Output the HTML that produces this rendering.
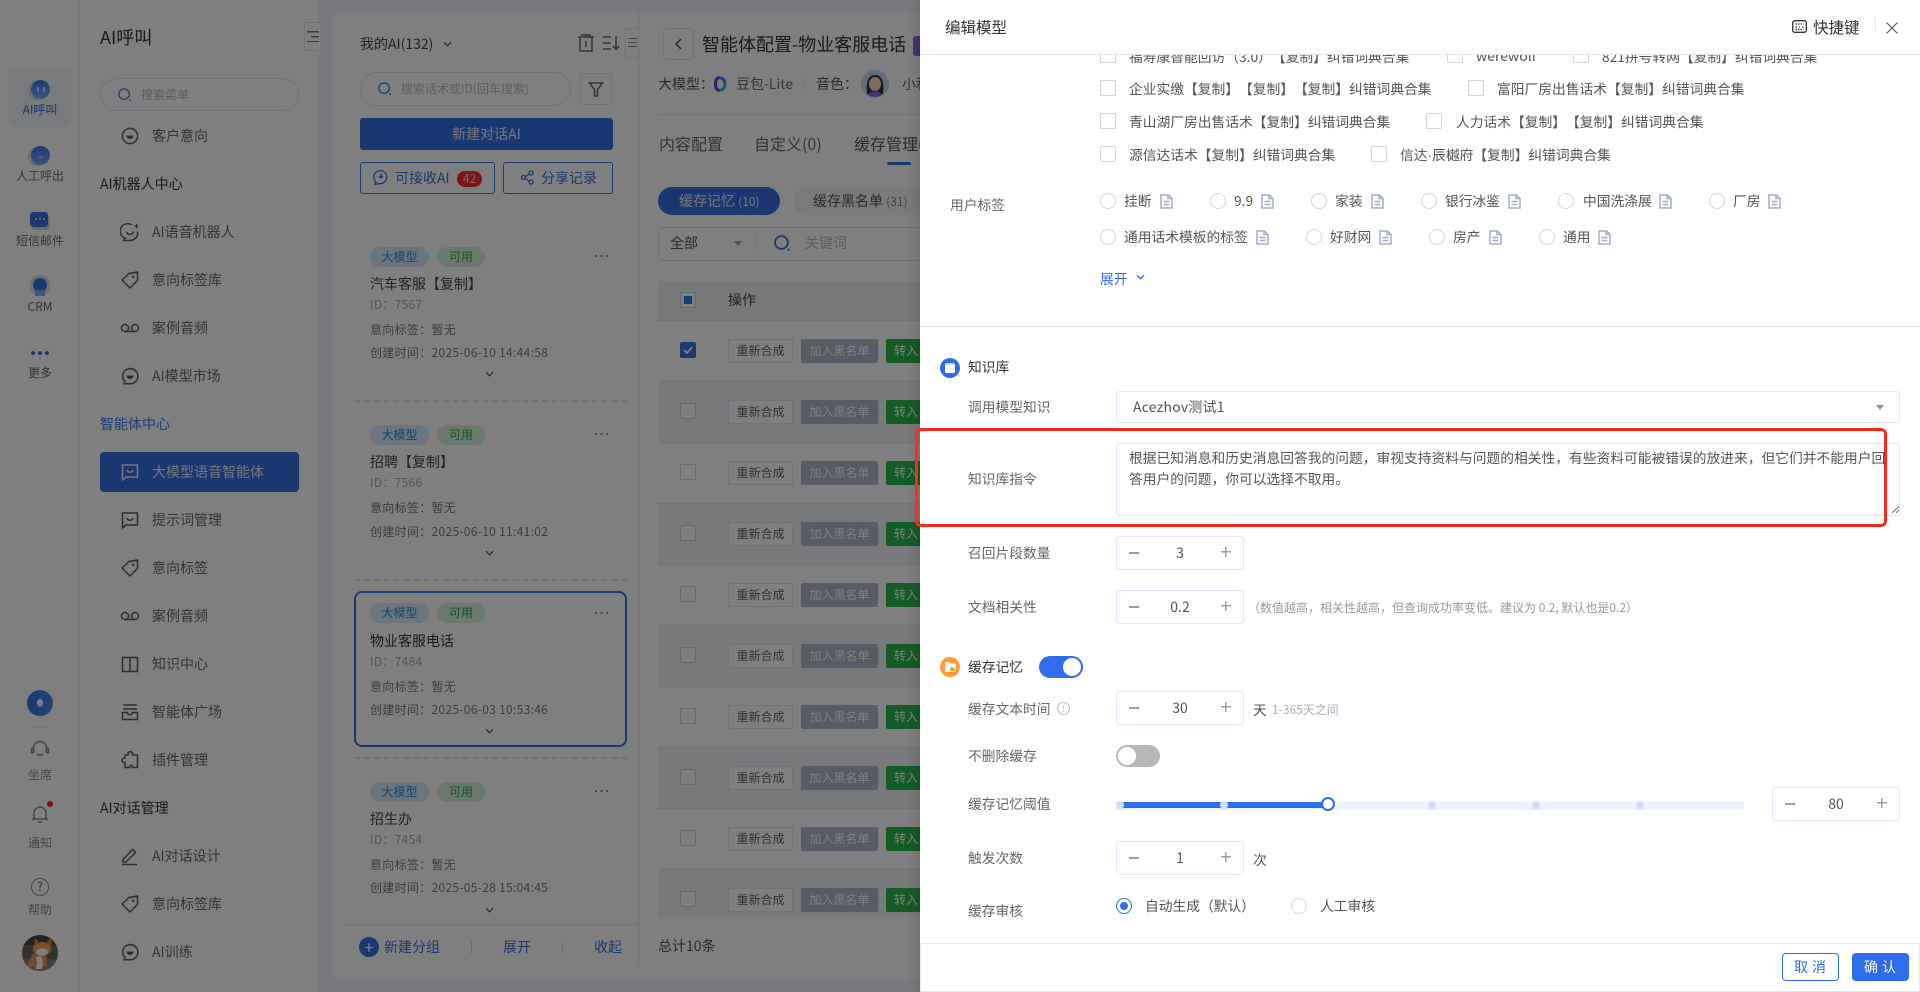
<!DOCTYPE html>
<html lang="zh-CN"><head><meta charset="utf-8"><title>编辑模型</title>
<style>
*{box-sizing:border-box}
html,body{margin:0;padding:0;width:1920px;height:992px;overflow:hidden;background:#fff}
body{font-family:"Noto Sans CJK SC","Liberation Sans",sans-serif;font-size:14px;color:#555;position:relative;text-spacing-trim:space-all}
.t{position:absolute;white-space:nowrap;line-height:20px;height:20px}
.a{position:absolute}
svg{position:absolute;overflow:visible}
.i{width:20px;height:20px;fill:none;stroke:#5c5c5c;stroke-width:1.5;left:120px}
.m{left:152px;color:#666}
.h{left:100px;color:#333}
.s{font-size:12px;text-align:center;left:0;width:80px;color:#666}
.tg{position:absolute;height:20px;border-radius:10px;font-size:12px;line-height:20px;text-align:center}
.tb{left:370px;width:59px;background:#d8ebfa;color:#1f8fe0}
.tv{left:437px;width:48px;background:#d6f0da;color:#2fa84f}
.dt{position:absolute;left:595px;width:13px;height:2px;background:radial-gradient(circle at 1px 1px,#888 1px,transparent 1.2px) 0 0/5.5px 2px repeat-x}
.tt{left:370px;color:#444}
.g{left:370px;font-size:12px;color:#888;letter-spacing:.3px}
.g2{left:370px;font-size:12px;color:#777;letter-spacing:.3px}
.d{position:absolute;left:354px;width:273px;border-top:2px dashed #e4e7ee;height:0}
.rw{position:absolute;left:658px;width:262px;height:61px;border-bottom:1px solid #e4e8ef}
.rg{background:#f1f3f7}
.cb{position:absolute;width:16px;height:16px;border:1px solid #d0d3da;border-radius:2px;background:#fff}
.b1,.b2,.b3{position:absolute;height:24px;font-size:12px;line-height:24px;text-align:center;border-radius:2px}
.b1{left:728px;width:65px;background:#fff;border:1px solid #dce6f8;color:#666;line-height:22px}
.b2{left:801px;width:77px;background:#b0b8cc;color:#fff}
.b3{left:886px;width:34px;background:#26b84a;color:#fff;text-align:left;padding-left:8px;border-radius:2px 0 0 2px}
#ov{position:absolute;left:0;top:0;width:920px;height:992px;background:rgba(0,0,0,.5)}
#dr{position:absolute;left:920px;top:0;width:1000px;height:992px;background:#fff;box-shadow:-4px 0 10px rgba(0,0,0,.12);overflow:hidden}
.c{font-size:13.75px;color:#555}
.dk{position:absolute;width:16px;height:16px;border:1px solid #d4d6da;border-radius:2px;background:#fff}
.rd{position:absolute;width:16px;height:16px;border:1px solid #d4d6da;border-radius:50%;background:#fff}
.l{left:48px;color:#666;font-size:13.75px;margin-top:-1px}
.n{position:absolute;left:196px;width:128px;height:34px;border:1px solid #dce6fa;border-radius:4px;background:#fff;text-align:center;line-height:32px;color:#555;font-size:14px}
.n:before{content:"";position:absolute;left:12px;top:15px;width:10px;height:1.5px;background:#9a9fa8}
.n:after{content:"";position:absolute;right:12px;top:10px;width:10px;height:10px;background:linear-gradient(#9a9fa8,#9a9fa8) center/10px 1.5px no-repeat,linear-gradient(#9a9fa8,#9a9fa8) center/1.5px 10px no-repeat}
.di{width:13px;height:15px;fill:none;stroke:#a3adc6;stroke-width:1.5}
.dot{position:absolute;width:8px;height:8px;border-radius:50%;background:#cfdcfa;top:801px}
</style></head><body>
<svg width="0" height="0" style="position:absolute"><defs>
<symbol id="face" viewBox="0 0 20 20"><circle cx="10" cy="10" r="7.6"/><path d="M6.5 9.5h7a3.5 3.5 0 0 1-7 0z" fill="#5c5c5c" stroke="none"/></symbol>
<symbol id="face2" viewBox="0 0 20 20"><path d="M6 16.500A7.600 7.600 0 1 1 10 17.800H3"/><path d="M6.500 9.500h7a3.500 3.500 0 0 1-7 0z" fill="#5c5c5c" stroke="none"/></symbol>
<symbol id="bot" viewBox="0 0 20 20"><path d="M12 3A7.500 7.500 0 1 0 5.500 16.300L3.500 18.500H10.500A7.500 7.500 0 0 0 17.500 9.500"/><path d="M6.500 9.500c.5 4 6 4 7 0"/><path d="M16.500 1l.8 2.200L19.500 4l-2.200.8L16.500 7l-.8-2.200L13.500 4l2.200-.8z" fill="#5c5c5c" stroke="none"/></symbol>
<symbol id="tag" viewBox="0 0 20 20"><path d="M2 10l7-6.500 8.500-1.500v8.500L10 18z" stroke-linejoin="round"/><circle cx="13" cy="6.800" r="1.200" fill="#5c5c5c" stroke="none"/></symbol>
<symbol id="vm" viewBox="0 0 20 20"><circle cx="5" cy="10" r="3.500"/><circle cx="15" cy="10" r="3.500"/><path d="M5 13.500h10"/></symbol>
<symbol id="msg" viewBox="0 0 20 20"><path d="M2.500 3h15v12H6l-3.500 3z" stroke-linejoin="round"/><path d="M7 8c.5 3 5.500 3 6 0"/></symbol>
<symbol id="book" viewBox="0 0 20 20"><path d="M2.500 3.500H10v14H2.500zM10 3.500h7.500v14H10z"/></symbol>
<symbol id="box" viewBox="0 0 20 20"><path d="M3 3h14M3 7h14M2.500 10.500h5c0 3 5 3 5 0h5v7h-15z"/></symbol>
<symbol id="pz" viewBox="0 0 20 20"><path d="M8 3.500c.5-2.500 4-2.500 4.500 0v1.500h5v12.500h-5c1-3-3-3-2.500 0H5v-5c-4 0-4-4.500 0-4.500V5h3z" stroke-linejoin="round"/></symbol>
<symbol id="pen" viewBox="0 0 20 20"><path d="M3 13.500L12.500 3.500l3 3L6 16H3zM2 18.500h15"/></symbol>
<symbol id="doc" viewBox="0 0 13 15"><path d="M1 1h7.500L12 4.500V14H1zM8 1v3.500h4M3.500 7.500h6M3.500 10.500h6"/></symbol>
<symbol id="srch" viewBox="0 0 16 16"><circle cx="7" cy="7" r="6"/><path d="M13 13l1.500 1.500"/></symbol>
<symbol id="chev" viewBox="0 0 10 6"><path d="M1 1l4 4 4-4"/></symbol>
</defs></svg>

<!-- column 1 -->
<div class="a" style="left:0;top:0;width:80px;height:992px;background:#fff;border-right:1px solid #f2f2f2"></div>
<div class="a" style="left:8px;top:69px;width:64px;height:58px;border-radius:8px;background:#f2f5fb"></div>
<div class="a" style="left:31px;top:80px;width:19px;height:19px;border-radius:50%;background:linear-gradient(#3470e0,#7ea8ff);box-shadow:-3px 1px 0 #cfd8ee"></div>
<div class="a" style="left:37px;top:87px;width:2px;height:5px;background:#cfdcfa"></div><div class="a" style="left:43px;top:87px;width:2px;height:5px;background:#cfdcfa"></div>
<div class="t s" style="top:100px;color:#3470e0">AI呼叫</div>
<div class="a" style="left:31px;top:146px;width:19px;height:19px;border-radius:50%;background:linear-gradient(#3470e0,#7ea8ff);box-shadow:-3px 1px 0 #cfd8ee"></div>
<div class="a" style="left:38px;top:155px;width:5px;height:3px;border-bottom:1px solid #cfdcfa;border-radius:0 0 4px 4px"></div>
<div class="t s" style="top:166px">人工呼出</div>
<div class="a" style="left:30px;top:212px;width:18px;height:15px;border-radius:3px;background:#3a72e0;box-shadow:2px 3px 0 #cfd8ee"></div>
<div class="a" style="left:34px;top:218px;width:11px;height:2px;background:radial-gradient(circle,#dfe8ff 1px,transparent 1px) 0 0/4px 2px"></div>
<div class="t s" style="top:231px">短信邮件</div>
<div class="a" style="left:33px;top:278px;width:14px;height:14px;border-radius:50%;background:#3470e0;box-shadow:0 0 0 3px #cfd8ee"></div>
<div class="a" style="left:35px;top:290px;width:10px;height:6px;background:#7ea8ff;border-radius:3px 3px 0 0"></div>
<div class="t s" style="top:297px">CRM</div>
<div class="a" style="left:31px;top:351px;width:4px;height:4px;border-radius:50%;background:#3470e0"></div><div class="a" style="left:38px;top:351px;width:4px;height:4px;border-radius:50%;background:#3470e0"></div><div class="a" style="left:45px;top:351px;width:4px;height:4px;border-radius:50%;background:#3470e0"></div>
<div class="t s" style="top:363px">更多</div>
<div class="a" style="left:27px;top:690px;width:26px;height:26px;border-radius:50%;background:linear-gradient(90deg,#2f6ee8,#3f8fe0)"></div>
<div class="a" style="left:37px;top:699px;width:6px;height:8px;border-radius:50%;background:#fff"></div>
<div class="a" style="left:32px;top:726px;width:17px;height:2px;background:#eef0f5"></div>
<svg style="left:30px;top:740px;width:20px;height:20px;fill:none;stroke:#888;stroke-width:1.500" viewBox="0 0 20 20"><path d="M3.500 8a6.500 6.500 0 0 1 13 0M3.500 8v5M16.500 8v5M7 14c2 1.500 4 1.500 6 0"/><rect x="1.500" y="8" width="2" height="5" rx="1"/><rect x="16.500" y="8" width="2" height="5" rx="1"/></svg>
<div class="t s" style="top:765px;color:#888">坐席</div>
<svg style="left:31px;top:804px;width:18px;height:20px;fill:none;stroke:#888;stroke-width:1.500" viewBox="0 0 18 20"><path d="M1 15h16M3 15V9a6 6 0 0 1 12 0v6M7 18h4"/></svg>
<div class="a" style="left:47px;top:801px;width:6px;height:6px;border-radius:50%;background:#ff2020"></div>
<div class="t s" style="top:833px;color:#888">通知</div>
<div class="a" style="left:31px;top:878px;width:18px;height:18px;border-radius:50%;border:1.500px solid #888;text-align:center;font-size:12px;line-height:15px;color:#888;font-weight:700">?</div>
<div class="t s" style="top:900px;color:#888">帮助</div>
<svg style="left:22px;top:935px;width:36px;height:36px" viewBox="0 0 36 36"><defs><clipPath id="av"><circle cx="18" cy="18" r="18"/></clipPath></defs><g clip-path="url(#av)"><rect width="36" height="36" fill="#6a6560"/><rect y="24" width="36" height="12" fill="#8a8078"/><rect width="36" height="10" fill="#4a4442"/><path d="M6 32c0-8 5-16 12-16s8 8 6 16z" fill="#e59a55"/><ellipse cx="20" cy="14" rx="9" ry="7" fill="#eda35c"/><path d="M12 10l1-7 5 5zM24 8l5-5 1 8z" fill="#d8853f"/><ellipse cx="20" cy="17" rx="6" ry="3.500" fill="#fff"/><path d="M14 22c2 6 1 10-1 12h7c1-4 1-9-1-13z" fill="#fff"/></g></svg>

<!-- column 2 -->
<div class="a" style="left:80px;top:0;width:240px;height:992px;background:#fff;border-right:1px solid #eef0f5"></div>
<div class="t" style="left:100px;top:27px;font-size:18px;color:#333">AI呼叫</div>
<div class="a" style="left:304px;top:22px;width:16px;height:29px;border:1px solid #e2e6ee;border-right:0;background:#fff"></div>
<div class="a" style="left:307px;top:31px;width:12px;height:11px;background:linear-gradient(#777,#777) 0 0/12px 1.500px no-repeat,linear-gradient(#777,#777) 4px 5px/8px 1.500px no-repeat,linear-gradient(#777,#777) 0 10px/12px 1.500px no-repeat"></div>
<div class="a" style="left:100px;top:78px;width:199px;height:33px;border:1px solid #dbe5f7;border-radius:17px"></div>
<svg style="left:118px;top:88px;width:14px;height:14px;fill:none;stroke:#3470e0;stroke-width:1.500"><use href="#srch"/></svg>
<div class="t" style="left:141px;top:85px;font-size:12px;color:#bbb">搜索菜单</div>
<svg class="i" style="top:126px"><use href="#face"/></svg><div class="t m" style="top:126px">客户意向</div>
<div class="t h" style="top:174px">AI机器人中心</div>
<svg class="i" style="top:222px"><use href="#bot"/></svg><div class="t m" style="top:222px">AI语音机器人</div>
<svg class="i" style="top:270px"><use href="#tag"/></svg><div class="t m" style="top:270px">意向标签库</div>
<svg class="i" style="top:318px"><use href="#vm"/></svg><div class="t m" style="top:318px">案例音频</div>
<svg class="i" style="top:366px"><use href="#face2"/></svg><div class="t m" style="top:366px">AI模型市场</div>
<div class="t h" style="top:414px;color:#3478f0">智能体中心</div>
<div class="a" style="left:100px;top:452px;width:199px;height:40px;border-radius:4px;background:#3470e0"></div>
<svg class="i" style="top:462px;stroke:#e8eefc"><use href="#msg"/></svg><div class="t m" style="top:462px;color:#e8eefc">大模型语音智能体</div>
<svg class="i" style="top:510px"><use href="#msg"/></svg><div class="t m" style="top:510px">提示词管理</div>
<svg class="i" style="top:558px"><use href="#tag"/></svg><div class="t m" style="top:558px">意向标签</div>
<svg class="i" style="top:606px"><use href="#vm"/></svg><div class="t m" style="top:606px">案例音频</div>
<svg class="i" style="top:654px"><use href="#book"/></svg><div class="t m" style="top:654px">知识中心</div>
<svg class="i" style="top:702px"><use href="#box"/></svg><div class="t m" style="top:702px">智能体广场</div>
<svg class="i" style="top:750px"><use href="#pz"/></svg><div class="t m" style="top:750px">插件管理</div>
<div class="t h" style="top:798px">AI对话管理</div>
<svg class="i" style="top:846px"><use href="#pen"/></svg><div class="t m" style="top:846px">AI对话设计</div>
<svg class="i" style="top:894px"><use href="#tag"/></svg><div class="t m" style="top:894px">意向标签库</div>
<svg class="i" style="top:942px"><use href="#face2"/></svg><div class="t m" style="top:942px">AI训练</div>

<!-- strip and panel -->
<div class="a" style="left:320px;top:0;width:600px;height:992px;background:#eff3fa"></div>
<div class="a" style="left:332px;top:12px;width:600px;height:967px;background:#fff;border-radius:8px 0 0 8px"></div>
<div class="a" style="left:638px;top:12px;width:1px;height:955px;background:#e4e7ee"></div>

<!-- list -->
<div class="t" style="left:360px;top:34px;color:#444">我的AI(132)</div>
<svg style="left:443px;top:41px;width:9px;height:6px;fill:none;stroke:#555;stroke-width:1.500"><use href="#chev"/></svg>
<svg style="left:578px;top:34px;width:16px;height:18px;fill:none;stroke:#666;stroke-width:1.500" viewBox="0 0 16 18"><path d="M0 3h16M3 1h10M2 3v14h12V3M8 7v6"/></svg>
<svg style="left:603px;top:35px;width:17px;height:16px;fill:none;stroke:#666;stroke-width:1.500" viewBox="0 0 17 16"><path d="M0 2h8M0 8h8M0 14h8M13 1v13M10 11l3 3.500 3-3.500"/></svg>
<div class="a" style="left:625px;top:28px;width:13px;height:30px;border:1px solid #e2e6ee;border-right:0;background:#fff"></div>
<div class="a" style="left:628px;top:38px;width:9px;height:9px;background:linear-gradient(#888,#888) 0 0/9px 1px no-repeat,linear-gradient(#888,#888) 0 4px/9px 1px no-repeat,linear-gradient(#888,#888) 0 8px/9px 1px no-repeat"></div>
<div class="a" style="left:360px;top:72px;width:211px;height:34px;border:1px solid #dbe5f7;border-radius:17px"></div>
<svg style="left:378px;top:82px;width:14px;height:14px;fill:none;stroke:#3470e0;stroke-width:1.500"><use href="#srch"/></svg>
<div class="t" style="left:401px;top:79px;font-size:12px;color:#bbb">搜索话术或ID(回车搜索)</div>
<div class="a" style="left:580px;top:73px;width:32px;height:32px;border:1px solid #dfe5f2;border-radius:3px"></div>
<svg style="left:589px;top:82px;width:14px;height:15px;fill:none;stroke:#666;stroke-width:1.500" viewBox="0 0 14 15"><path d="M.5 1h13L8.500 7.500V14h-3V7.500z"/></svg>
<div class="a" style="left:360px;top:118px;width:253px;height:32px;border-radius:3px;background:#3470e0;color:#e8eefc;text-align:center;line-height:32px">新建对话AI</div>
<div class="a" style="left:360px;top:162px;width:135px;height:32px;border:1px solid #3470e0;border-radius:3px"></div>
<svg style="left:374px;top:170px;width:14px;height:15px;fill:none;stroke:#3470e0;stroke-width:1.300" viewBox="0 0 14 15"><path d="M2 12a6.500 6.500 0 1 1 3 1.500L1 14.500zM7 3.500V8M5 6l2 2 2-2"/></svg>
<div class="t" style="left:395px;top:168px;color:#3470e0">可接收AI</div>
<div class="a" style="left:457px;top:171px;width:25px;height:16px;border-radius:8px;background:#ff2830;color:#f4d0d0;font-size:12px;line-height:16px;text-align:center">42</div>
<div class="a" style="left:503px;top:162px;width:110px;height:32px;border:1px solid #3470e0;border-radius:3px"></div>
<svg style="left:521px;top:170px;width:13px;height:15px;fill:none;stroke:#3470e0;stroke-width:1.300" viewBox="0 0 13 15"><circle cx="2.500" cy="7.500" r="2"/><circle cx="10" cy="3" r="2"/><circle cx="10" cy="12" r="2"/><path d="M4.500 6.500L8 4M4.500 8.500L8 11"/></svg>
<div class="t" style="left:541px;top:168px;color:#3470e0">分享记录</div>

<div class="tg tb" style="top:247px">大模型</div><div class="tg tv" style="top:247px">可用</div><div class="dt" style="top:255px"></div>
<div class="t tt" style="top:274px">汽车客服【复制】</div><div class="t g" style="top:295px;color:#aaa">ID：7567</div>
<div class="t g2" style="top:320px">意向标签：暂无</div><div class="t g2" style="top:343px">创建时间：2025-06-10 14:44:58</div>
<svg style="left:485px;top:371px;width:9px;height:6px;fill:none;stroke:#444;stroke-width:1.300"><use href="#chev"/></svg>
<div class="d" style="top:400px"></div>
<div class="tg tb" style="top:425px">大模型</div><div class="tg tv" style="top:425px">可用</div><div class="dt" style="top:433px"></div>
<div class="t tt" style="top:452px">招聘【复制】</div><div class="t g" style="top:473px;color:#aaa">ID：7566</div>
<div class="t g2" style="top:498px">意向标签：暂无</div><div class="t g2" style="top:522px">创建时间：2025-06-10 11:41:02</div>
<svg style="left:485px;top:550px;width:9px;height:6px;fill:none;stroke:#444;stroke-width:1.300"><use href="#chev"/></svg>
<div class="d" style="top:579px"></div>
<div class="a" style="left:354px;top:591px;width:273px;height:156px;border:2px solid #3470e0;border-radius:8px"></div>
<div class="tg tb" style="top:603px">大模型</div><div class="tg tv" style="top:603px">可用</div><div class="dt" style="top:612px"></div>
<div class="t tt" style="top:631px;color:#333">物业客服电话</div><div class="t g" style="top:652px;color:#aaa">ID：7484</div>
<div class="t g2" style="top:677px">意向标签：暂无</div><div class="t g2" style="top:700px">创建时间：2025-06-03 10:53:46</div>
<svg style="left:485px;top:728px;width:9px;height:6px;fill:none;stroke:#444;stroke-width:1.300"><use href="#chev"/></svg>
<div class="d" style="top:757px"></div>
<div class="tg tb" style="top:782px">大模型</div><div class="tg tv" style="top:782px">可用</div><div class="dt" style="top:790px"></div>
<div class="t tt" style="top:809px">招生办</div><div class="t g" style="top:830px;color:#aaa">ID：7454</div>
<div class="t g2" style="top:855px">意向标签：暂无</div><div class="t g2" style="top:878px">创建时间：2025-05-28 15:04:45</div>
<svg style="left:485px;top:907px;width:9px;height:6px;fill:none;stroke:#444;stroke-width:1.300"><use href="#chev"/></svg>
<div class="a" style="left:344px;top:923px;width:294px;height:3px;background:#eef1f7"></div>
<div class="a" style="left:344px;top:926px;width:294px;height:53px;background:#fff"></div>
<div class="a" style="left:359px;top:937px;width:20px;height:20px;border-radius:50%;background:#3470e0;color:#fff;text-align:center;line-height:19px;font-size:17px">+</div>
<div class="t" style="left:384px;top:937px;color:#3470e0">新建分组</div>
<div class="a" style="left:471px;top:941px;width:1px;height:13px;background:#ddd"></div>
<div class="t" style="left:503px;top:937px;color:#3470e0">展开</div>
<div class="a" style="left:562px;top:941px;width:1px;height:13px;background:#ddd"></div>
<div class="t" style="left:594px;top:937px;color:#3470e0">收起</div>

<!-- right -->
<div class="a" style="left:663px;top:28px;width:31px;height:32px;border:1px solid #dfe5f2;border-radius:4px"></div>
<svg style="left:675px;top:38px;width:7px;height:12px;fill:none;stroke:#555;stroke-width:1.500" viewBox="0 0 7 12"><path d="M6 1L1 6l5 5"/></svg>
<div class="t" style="left:702px;top:34px;font-size:18px;color:#333;line-height:20px">智能体配置-物业客服电话</div>
<div class="a" style="left:913px;top:36px;width:7px;height:20px;background:#9060f0;border-radius:3px 0 0 3px"></div>
<div class="t" style="left:658px;top:74px;color:#555">大模型：</div>
<svg style="left:713px;top:76px;width:14px;height:16px;fill:none" viewBox="0 0 14 16"><path d="M7 2C4 1 2.500 4 2.500 8S4 15 7 14" stroke="#6a40e0" stroke-width="3"/><path d="M7 2c3 0 5 2.500 5 6" stroke="#3a8af0" stroke-width="3"/><path d="M12 8c0 3.500-2 6-5 6" stroke="#20c0a0" stroke-width="3"/></svg>
<div class="t" style="left:736px;top:74px;color:#666">豆包-Lite</div>
<div class="a" style="left:803px;top:78px;width:1px;height:12px;background:#e4e7ee"></div>
<div class="t" style="left:816px;top:74px;color:#555">音色：</div>
<svg style="left:861px;top:70px;width:28px;height:28px" viewBox="0 0 28 28"><circle cx="14" cy="14" r="14" fill="#c2dcf2"/><path d="M6 24c-1-10 0-19 8-19s9 9 8 19z" fill="#333"/><ellipse cx="14" cy="14" rx="6" ry="7" fill="#fbd6c0"/><path d="M7 25c2-5 12-5 14 0a14 14 0 0 1-14 0z" fill="#7a6ae0"/></svg>
<div class="t" style="left:902px;top:74px;color:#666">小和</div>
<div class="a" style="left:658px;top:114px;width:262px;height:1px;background:#e8ebf3"></div>
<div class="t" style="left:659px;top:133px;font-size:16px;color:#666">内容配置</div>
<div class="t" style="left:754px;top:133px;font-size:16px;color:#666">自定义(0)</div>
<div class="t" style="left:854px;top:133px;font-size:16px;color:#555">缓存管理(</div>
<div class="a" style="left:887px;top:162px;width:24px;height:3px;border-radius:2px;background:#3470e0"></div>
<div class="a" style="left:658px;top:187px;width:122px;height:28px;border-radius:14px;background:#3470e0"></div>
<div class="t" style="left:679px;top:191px;color:#e8eefc">缓存记忆 <span style="font-size:12px">(10)</span></div>
<div class="a" style="left:793px;top:187px;width:127px;height:28px;border-radius:14px 0 0 14px;background:#f2f4f7"></div>
<div class="t" style="left:813px;top:191px;color:#555">缓存黑名单 <span style="font-size:12px;color:#888">(31)</span></div>
<div class="a" style="left:658px;top:227px;width:262px;height:34px;border:1px solid #dfe5f2;border-right:0;border-radius:4px 0 0 4px"></div>
<div class="t" style="left:670px;top:233px;color:#555">全部</div>
<div class="a" style="left:734px;top:241px;border:4px solid transparent;border-top:5px solid #9a9fa8"></div>
<div class="a" style="left:756px;top:236px;width:1px;height:14px;background:#e4e7ee"></div>
<svg style="left:774px;top:235px;width:17px;height:17px;fill:none;stroke:#3470e0;stroke-width:1.700"><use href="#srch"/></svg>
<div class="t" style="left:805px;top:233px;color:#bbb">关键词</div>
<div class="a" style="left:658px;top:281px;width:262px;height:40px;background:#edf0f5;border-bottom:1px solid #e4e8ef"></div>
<div class="cb" style="left:680px;top:292px"></div><div class="a" style="left:684px;top:296px;width:8px;height:8px;background:#1a84ff"></div>
<div class="t" style="left:728px;top:290px;color:#444">操作</div>

<div class="rw" style="top:321px"></div><div class="rw rg" style="top:382px"></div><div class="rw" style="top:443px"></div><div class="rw rg" style="top:504px"></div><div class="rw" style="top:565px"></div><div class="rw rg" style="top:626px"></div><div class="rw" style="top:687px"></div><div class="rw rg" style="top:748px"></div><div class="rw" style="top:809px"></div><div class="rw rg" style="top:870px;height:47px;border:0"></div>

<div class="cb" style="left:680px;top:342px;background:#3470e0;border-color:#3470e0"></div>
<svg style="left:683px;top:346px;width:10px;height:8px;fill:none;stroke:#fff;stroke-width:1.800" viewBox="0 0 10 8"><path d="M1 4l3 3 5-6"/></svg>
<div class="b1" style="top:339px">重新合成</div><div class="b2" style="top:339px">加入黑名单</div><div class="b3" style="top:339px">转入</div>
<div class="cb" style="left:680px;top:403px"></div><div class="b1" style="top:400px">重新合成</div><div class="b2" style="top:400px">加入黑名单</div><div class="b3" style="top:400px">转入</div>
<div class="cb" style="left:680px;top:464px"></div><div class="b1" style="top:461px">重新合成</div><div class="b2" style="top:461px">加入黑名单</div><div class="b3" style="top:461px">转入</div>
<div class="cb" style="left:680px;top:525px"></div><div class="b1" style="top:522px">重新合成</div><div class="b2" style="top:522px">加入黑名单</div><div class="b3" style="top:522px">转入</div>
<div class="cb" style="left:680px;top:586px"></div><div class="b1" style="top:583px">重新合成</div><div class="b2" style="top:583px">加入黑名单</div><div class="b3" style="top:583px">转入</div>
<div class="cb" style="left:680px;top:647px"></div><div class="b1" style="top:644px">重新合成</div><div class="b2" style="top:644px">加入黑名单</div><div class="b3" style="top:644px">转入</div>
<div class="cb" style="left:680px;top:708px"></div><div class="b1" style="top:705px">重新合成</div><div class="b2" style="top:705px">加入黑名单</div><div class="b3" style="top:705px">转入</div>
<div class="cb" style="left:680px;top:769px"></div><div class="b1" style="top:766px">重新合成</div><div class="b2" style="top:766px">加入黑名单</div><div class="b3" style="top:766px">转入</div>
<div class="cb" style="left:680px;top:830px"></div><div class="b1" style="top:827px">重新合成</div><div class="b2" style="top:827px">加入黑名单</div><div class="b3" style="top:827px">转入</div>
<div class="cb" style="left:680px;top:891px"></div><div class="b1" style="top:888px">重新合成</div><div class="b2" style="top:888px">加入黑名单</div><div class="b3" style="top:888px">转入</div>
<div class="t" style="left:658px;top:936px;color:#555">总计10条</div>

<div id="ov"></div>

<!-- drawer: coordinates relative to x=920 -->
<div id="dr">
<div class="dk" style="left:180px;top:47px"></div><div class="t c" style="left:209px;top:46px">福寿康智能回访（3.0）【复制】纠错词典合集</div>
<div class="dk" style="left:527px;top:47px"></div><div class="t" style="left:556px;top:46px;color:#555;font-size:14px">werewolf</div>
<div class="dk" style="left:653px;top:47px"></div><div class="t c" style="left:682px;top:46px">821拼号转网【复制】纠错词典合集</div>
<div class="a" style="left:0;top:0;width:1000px;height:55px;background:#fff;border-bottom:1px solid #e5e6ea"></div>
<div class="t" style="left:25px;top:17px;font-size:15.500px;color:#333">编辑模型</div>
<svg style="left:872px;top:20px;width:15px;height:13px;fill:none;stroke:#333;stroke-width:1.300" viewBox="0 0 15 13"><rect x=".7" y=".7" width="13.600" height="11.600" rx="2"/><path d="M3.500 4h8M3.500 7h2M7 7h1M10 7h1.500M3.500 9.500h8" stroke-dasharray="1.500 1"/></svg>
<div class="t" style="left:893px;top:17px;font-size:15.500px;color:#333">快捷键</div>
<div class="a" style="left:955px;top:17px;width:1px;height:16px;background:#e5e6ea"></div>
<svg style="left:966px;top:22px;width:12px;height:12px;fill:none;stroke:#555;stroke-width:1.200" viewBox="0 0 12 12"><path d="M.5.500l11 11M11.500.500l-11 11"/></svg>

<div class="dk" style="left:180px;top:80px"></div><div class="t c" style="left:209px;top:78px">企业实缴【复制】【复制】【复制】纠错词典合集</div>
<div class="dk" style="left:548px;top:80px"></div><div class="t c" style="left:577px;top:78px">富阳厂房出售话术【复制】纠错词典合集</div>
<div class="dk" style="left:180px;top:113px"></div><div class="t c" style="left:209px;top:111px">青山湖厂房出售话术【复制】纠错词典合集</div>
<div class="dk" style="left:506px;top:113px"></div><div class="t c" style="left:536px;top:111px">人力话术【复制】【复制】纠错词典合集</div>
<div class="dk" style="left:180px;top:146px"></div><div class="t c" style="left:209px;top:144px">源信达话术【复制】纠错词典合集</div>
<div class="dk" style="left:451px;top:146px"></div><div class="t c" style="left:480px;top:144px">信达<span style="font-family:'Liberation Sans',sans-serif">·</span>辰樾府【复制】纠错词典合集</div>

<div class="t l" style="left:30px;top:195px">用户标签</div>
<div class="rd" style="left:180px;top:193px"></div><div class="t c" style="left:204px;top:190px">挂断</div><svg class="di" style="left:240px;top:194px"><use href="#doc"/></svg>
<div class="rd" style="left:290px;top:193px"></div><div class="t c" style="left:314px;top:190px">9.9</div><svg class="di" style="left:341px;top:194px"><use href="#doc"/></svg>
<div class="rd" style="left:391px;top:193px"></div><div class="t c" style="left:415px;top:190px">家装</div><svg class="di" style="left:451px;top:194px"><use href="#doc"/></svg>
<div class="rd" style="left:501px;top:193px"></div><div class="t c" style="left:525px;top:190px">银行冰鉴</div><svg class="di" style="left:588px;top:194px"><use href="#doc"/></svg>
<div class="rd" style="left:638px;top:193px"></div><div class="t c" style="left:663px;top:190px">中国洗涤展</div><svg class="di" style="left:739px;top:194px"><use href="#doc"/></svg>
<div class="rd" style="left:789px;top:193px"></div><div class="t c" style="left:813px;top:190px">厂房</div><svg class="di" style="left:848px;top:194px"><use href="#doc"/></svg>
<div class="rd" style="left:180px;top:229px"></div><div class="t c" style="left:204px;top:226px">通用话术模板的标签</div><svg class="di" style="left:336px;top:230px"><use href="#doc"/></svg>
<div class="rd" style="left:386px;top:229px"></div><div class="t c" style="left:410px;top:226px">好财网</div><svg class="di" style="left:459px;top:230px"><use href="#doc"/></svg>
<div class="rd" style="left:509px;top:229px"></div><div class="t c" style="left:533px;top:226px">房产</div><svg class="di" style="left:569px;top:230px"><use href="#doc"/></svg>
<div class="rd" style="left:619px;top:229px"></div><div class="t c" style="left:643px;top:226px">通用</div><svg class="di" style="left:678px;top:230px"><use href="#doc"/></svg>
<div class="t c" style="left:180px;top:268px;color:#2f6ded">展开</div>
<svg style="left:216px;top:274px;width:9px;height:6px;fill:none;stroke:#2f6ded;stroke-width:1.500"><use href="#chev"/></svg>
<div class="a" style="left:0;top:326px;width:1000px;height:1px;background:#e5e6ea"></div>

<div class="a" style="left:20px;top:358px;width:20px;height:20px;border-radius:50%;background:#2f6ded"></div>
<div class="a" style="left:25px;top:363px;width:10px;height:10px;border-radius:2px;background:#fff;border-top:2px solid #cfdcfa"></div>
<div class="t c" style="left:48px;top:356px;color:#333">知识库</div>
<div class="t l" style="top:397px">调用模型知识</div>
<div class="a" style="left:196px;top:391px;width:784px;height:32px;border:1px solid #dce6fa;border-radius:4px"></div>
<div class="t" style="left:213px;top:397px;color:#555;letter-spacing:.2px">Acezhov测试1</div>
<div class="a" style="left:956px;top:405px;border:4px solid transparent;border-top:5px solid #8a8f9a"></div>
<div class="t l" style="top:469px">知识库指令</div>
<div class="a" style="left:196px;top:443px;width:784px;height:73px;border:1px solid #dce6fa;border-radius:4px"></div>
<div class="t c" style="left:209px;top:447px">根据已知消息和历史消息回答我的问题，审视支持资料与问题的相关性，有些资料可能被错误的放进来，但它们并不能用户回</div>
<div class="t c" style="left:209px;top:468px">答用户的问题，你可以选择不取用。</div>
<svg style="left:972px;top:506px;width:7px;height:7px;fill:none;stroke:#555;stroke-width:.8" viewBox="0 0 7 7"><path d="M0 7l7-7M4 7l3-3"/></svg>
<div class="t l" style="top:543px">召回片段数量</div>
<div class="n" style="top:536px">3</div>
<div class="t l" style="top:597px">文档相关性</div>
<div class="n" style="top:590px">0.2</div>
<div class="t" style="left:328px;top:598px;font-size:12px;color:#999">（数值越高，相关性越高，但查询成功率变低。建议为 0.2, 默认也是0.2）</div>

<div class="a" style="left:20px;top:657px;width:20px;height:20px;border-radius:50%;background:#ff9a2e"></div>
<svg style="left:25px;top:662px;width:11px;height:10px" viewBox="0 0 11 10"><path d="M0 1.500Q0 0 1.500 0H4l1.500 1.500H10Q11 1.500 11 2.500V9Q11 10 10 10H1Q0 10 0 9z" fill="#fff"/><circle cx="7" cy="7" r="2" fill="#ff9a2e"/><circle cx="9" cy="8" r="1.500" fill="#ff9a2e"/></svg>
<div class="t c" style="left:48px;top:656px;color:#333">缓存记忆</div>
<div class="a" style="left:119px;top:656px;width:44px;height:22px;border-radius:11px;background:#2f6ded"></div>
<div class="a" style="left:143px;top:658px;width:18px;height:18px;border-radius:50%;background:#fff"></div>
<div class="t l" style="top:699px">缓存文本时间</div>
<div class="a" style="left:137px;top:702px;width:13px;height:13px;border-radius:50%;border:1px solid #bbb;font-size:9px;line-height:11px;text-align:center;color:#bbb">!</div>
<div class="n" style="top:691px">30</div>
<div class="t c" style="left:333px;top:699px">天</div>
<div class="t" style="left:352px;top:700px;font-size:12px;color:#a8adb8">1-365天之间</div>
<div class="t l" style="top:746px">不删除缓存</div>
<div class="a" style="left:196px;top:745px;width:44px;height:22px;border-radius:11px;background:#b8b8b8"></div>
<div class="a" style="left:198px;top:747px;width:18px;height:18px;border-radius:50%;background:#fff"></div>
<div class="t l" style="top:794px">缓存记忆阈值</div>
<div class="a" style="left:196px;top:802px;width:628px;height:8px;background:#eff3fd"></div>
<div class="a" style="left:200px;top:802px;width:208px;height:6px;background:#2f6ded"></div>
<div class="dot" style="left:196px"></div><div class="dot" style="left:300px"></div><div class="dot" style="left:508px"></div><div class="dot" style="left:612px"></div><div class="dot" style="left:716px"></div>
<div class="a" style="left:401px;top:797px;width:14px;height:14px;border-radius:50%;background:#fff;border:2px solid #2f6ded"></div>
<div class="n" style="left:852px;top:787px">80</div>
<div class="t l" style="top:848px">触发次数</div>
<div class="n" style="top:841px">1</div>
<div class="t c" style="left:333px;top:849px">次</div>
<div class="t l" style="top:901px">缓存审核</div>
<div class="rd" style="left:196px;top:898px;border-color:#2f6ded"></div>
<div class="a" style="left:200px;top:902px;width:8px;height:8px;border-radius:50%;background:#2f6ded"></div>
<div class="t c" style="left:225px;top:895px">自动生成（默认）</div>
<div class="rd" style="left:371px;top:898px"></div>
<div class="t c" style="left:400px;top:895px">人工审核</div>

<div class="a" style="left:0;top:943px;width:1000px;height:49px;background:#fff;border:1px solid #e5e6ea"></div>
<div class="a" style="left:862px;top:953px;width:57px;height:28px;border:1px solid #2f6ded;border-radius:4px;color:#2f6ded;text-align:center;line-height:26px;letter-spacing:4px;padding-left:3px">取消</div>
<div class="a" style="left:932px;top:953px;width:57px;height:28px;border-radius:4px;background:#2f6ded;color:#fff;text-align:center;line-height:28px;letter-spacing:4px;padding-left:3px">确认</div>
</div>

<div class="a" style="left:915px;top:428px;width:972px;height:99px;border:3px solid #ff2a1a;border-radius:6px"></div>
</body></html>
